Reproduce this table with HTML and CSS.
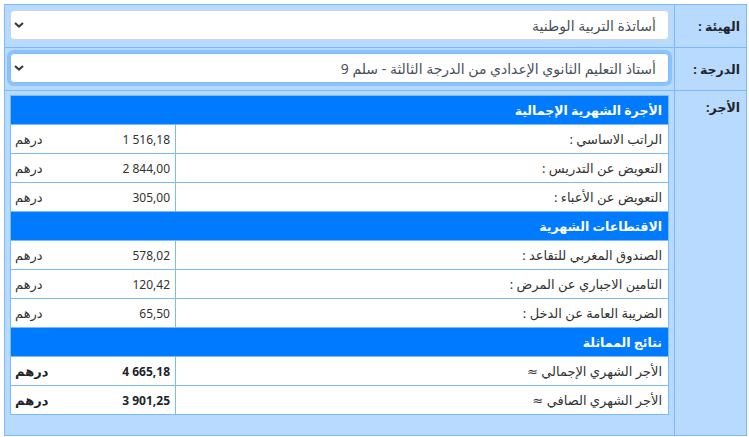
FILE: index.html
```html
<!DOCTYPE html>
<html lang="ar" dir="rtl">
<head>
<meta charset="utf-8">
<link rel="stylesheet" href="styles.css">
</head>
<body>
<div class="form">
  <div class="label">الهيئة :</div>
  <div class="value">
    <div class="select">
      <span class="select-text">أساتذة التربية الوطنية</span>
      <svg class="chev" width="10" height="6" viewBox="0 0 10 6"><path d="M1 1l4 3.6L9 1" fill="none" stroke="#343a40" stroke-width="2"/></svg>
    </div>
  </div>

  <div class="label">الدرجة :</div>
  <div class="value">
    <div class="select focus">
      <span class="select-text">أستاذ التعليم الثانوي الإعدادي من الدرجة الثالثة - سلم 9</span>
      <svg class="chev" width="10" height="6" viewBox="0 0 10 6"><path d="M1 1l4 3.6L9 1" fill="none" stroke="#343a40" stroke-width="2"/></svg>
    </div>
  </div>

  <div class="label top">الأجر:</div>
  <div class="value pay">
    <table class="salary">
      <tr class="head"><td colspan="2">الأجرة الشهرية الإجمالية</td></tr>
      <tr><td class="name">الراتب الاساسي :</td><td class="amt"><div class="amt-in"><span class="num">1 516,18</span><span class="cur">درهم</span></div></td></tr>
      <tr><td class="name">التعويض عن التدريس :</td><td class="amt"><div class="amt-in"><span class="num">2 844,00</span><span class="cur">درهم</span></div></td></tr>
      <tr><td class="name">التعويض عن الأعباء :</td><td class="amt"><div class="amt-in"><span class="num">305,00</span><span class="cur">درهم</span></div></td></tr>
      <tr class="head"><td colspan="2">الاقتطاعات الشهرية</td></tr>
      <tr><td class="name">الصندوق المغربي للتقاعد :</td><td class="amt"><div class="amt-in"><span class="num">578,02</span><span class="cur">درهم</span></div></td></tr>
      <tr><td class="name">التامين الاجباري عن المرض :</td><td class="amt"><div class="amt-in"><span class="num">120,42</span><span class="cur">درهم</span></div></td></tr>
      <tr><td class="name">الضريبة العامة عن الدخل :</td><td class="amt"><div class="amt-in"><span class="num">65,50</span><span class="cur">درهم</span></div></td></tr>
      <tr class="head"><td colspan="2">نتائج المماثلة</td></tr>
      <tr><td class="name">الأجر الشهري الإجمالي ≈</td><td class="amt strong"><div class="amt-in"><span class="num">4 665,18</span><span class="cur">درهم</span></div></td></tr>
      <tr><td class="name">الأجر الشهري الصافي ≈</td><td class="amt strong"><div class="amt-in"><span class="num">3 901,25</span><span class="cur">درهم</span></div></td></tr>
    </table>
  </div>
</div>
</body>
</html>
```
FILE: styles.css
```css
html, body {
  margin: 0;
  padding: 0;
  background: #ffffff;
}
body {
  margin: 4px 2px 0 4px;
  font-family: "Noto Sans", "DejaVu Sans", sans-serif;
  font-size: 13px;
  color: #333;
}
.form {
  display: grid;
  grid-template-columns: 71px 1fr;
  grid-template-rows: 42px 42px auto;
  gap: 1px;
  background: #7abaff;
  border: 1px solid #7abaff;
}
.label {
  background: #b8daff;
  font-weight: bold;
  font-size: 12.5px;
  color: #212529;
  padding: 0 6px;
  display: flex;
  align-items: center;
}
.label.top {
  align-items: flex-start;
  padding-top: 8px;
}
.value {
  background: #b8daff;
  padding: 5px;
}
.value.pay {
  padding: 4px 5px 20px;
}
.select {
  position: relative;
  box-sizing: border-box;
  height: 30px;
  background: #fff;
  border: 1px solid #ced4da;
  border-radius: 4px;
  display: flex;
  align-items: center;
  padding: 0 12px;
  color: #495057;
  font-size: 14px;
}
.select.focus {
  border-color: #80bdff;
  box-shadow: 0 0 0 3px rgba(0, 123, 255, 0.25);
}
.chev {
  position: absolute;
  left: 3px;
  top: 11px;
}
.salary {
  width: 100%;
  border-collapse: separate;
  border-spacing: 0;
  border: 1px solid #7abaff;
  background: #fff;
}
.salary td {
  height: 28px;
  padding: 0 6px;
  border-top: 1px solid #7abaff;
  white-space: nowrap;
}
.salary tr:first-child td {
  border-top: 0;
}
.salary .head td {
  background: #007bff;
  color: #fff;
  font-weight: bold;
  font-size: 12.5px;
}
.salary .name {
  color: #333;
}
.salary .amt {
  box-sizing: border-box;
  width: 165px;
  padding: 0 5px 0 4px;
  border-right: 1px solid #7abaff;
  font-size: 12px;
}
.amt-in {
  display: flex;
  justify-content: space-between;
  align-items: center;
}
.num {
  direction: ltr;
  unicode-bidi: isolate;
}
.cur {
  font-size: 13px;
}
.amt.strong {
  font-weight: bold;
  color: #212529;
}
```
